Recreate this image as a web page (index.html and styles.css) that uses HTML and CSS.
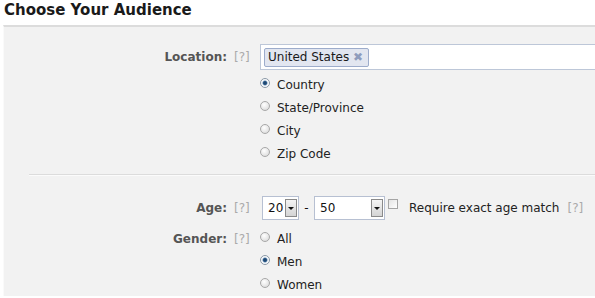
FILE: index.html
```html
<!DOCTYPE html>
<html lang="en">
<head>
  <meta charset="UTF-8">
  <title>Choose Your Audience</title>
  <link rel="stylesheet" href="styles.css">
</head>
<body>
  <h1 class="title">Choose Your Audience</h1>
  <div class="panel">
    <div class="row location">
      <div class="label">Location:</div>
      <div class="help">[?]</div>
      <div class="controls">
        <div class="token-input">
          <span class="token">United States <span class="remove">&#x2716;</span></span>
        </div>
        <ul class="radios">
          <li><span class="radio checked"></span>Country</li>
          <li><span class="radio"></span>State/Province</li>
          <li><span class="radio"></span>City</li>
          <li><span class="radio"></span>Zip Code</li>
        </ul>
      </div>
    </div>

    <div class="divider"></div>

    <div class="row age">
      <div class="label">Age:</div>
      <div class="help">[?]</div>
      <div class="controls inline">
        <div class="select small"><span class="value">20</span><span class="arrow"></span></div>
        <span class="dash">-</span>
        <div class="select wide"><span class="value">50</span><span class="arrow"></span></div>
        <span class="checkbox"></span>
        <span class="exact">Require exact age match</span>
        <span class="help-inline">[?]</span>
      </div>
    </div>

    <div class="row gender">
      <div class="label">Gender:</div>
      <div class="help">[?]</div>
      <div class="controls">
        <ul class="radios">
          <li><span class="radio"></span>All</li>
          <li><span class="radio checked"></span>Men</li>
          <li><span class="radio"></span>Women</li>
        </ul>
      </div>
    </div>
  </div>
</body>
</html>
```

FILE: styles.css
```css
html, body {
  height: 100%;
}
body {
  margin: 0;
  background: #fff;
  font-family: "DejaVu Sans", Verdana, sans-serif;
  font-size: 11px;
  color: #333;
  overflow: hidden;
}
.title {
  margin: 0;
  padding: 1px 0 0 4px;
  height: 25px;
  box-sizing: border-box;
  font-size: 15px;
  font-weight: bold;
  color: #1a1a1a;
}
.panel {
  margin-left: 3px;
  background: #f2f2f2;
  border-top: 2px solid #dcdcdc;
  border-left: 1px solid #fafafa;
  padding-top: 17px;
  height: calc(100% - 27px);
  box-sizing: border-box;
}
.row {
  display: grid;
  grid-template-columns: 223px 33px 1fr;
}
.label {
  text-align: right;
  font-weight: bold;
  font-size: 12px;
  color: #555;
  line-height: 26px;
}
.help {
  padding-left: 7px;
  color: #aaa;
  font-size: 12px;
  line-height: 26px;
}
.token-input {
  background: #fff;
  border: 1px solid #bdc7d8;
  border-right: none;
  padding: 3px 0 0 3px;
  box-sizing: border-box;
  height: 26px;
}
.token {
  display: inline-block;
  height: 17px;
  line-height: 17px;
  padding: 0 5px 0 3px;
  background: #e2e6f0;
  border: 1px solid #9daccb;
  border-radius: 2px;
  color: #1a1a1a;
  font-size: 12px;
}
.remove {
  color: #8e9cbd;
  font-size: 12px;
  font-weight: bold;
}
.radios {
  list-style: none;
  margin: 4px 0 0;
  padding: 0;
}
.radios li {
  height: 23px;
  line-height: 23px;
  display: flex;
  align-items: center;
  color: #222;
  font-size: 12px;
}
.radio {
  width: 8px;
  height: 8px;
  border-radius: 50%;
  border: 1px solid #a8a8a8;
  background: radial-gradient(circle at 40% 35%, #fff 0, #e6e6e6 60%, #cfcfcf 100%);
  margin: -5px 7px 0 0;
  box-sizing: content-box;
  flex: none;
}
.radio.checked {
  border-color: #8c9aa8;
  background: radial-gradient(circle, #1c3a5a 0, #2a5a8a 30%, #e8eef4 50%, #fff 70%, #d8d8d8 100%);
}
.divider {
  margin: 8px 0 20px 25px;
  border-top: 1px solid #dcdcdc;
  border-bottom: 1px solid #fbfbfb;
}
.age .label, .age .help {
  line-height: 24px;
}
.inline {
  display: flex;
  align-items: center;
  height: 24px;
}
.select {
  display: flex;
  align-items: center;
  height: 24px;
  box-sizing: border-box;
  background: #fff;
  border: 1px solid #b7c0d2;
  padding: 0 1px 0 5px;
  font-size: 12px;
  color: #111;
}
.select .value {
  flex: 1;
}
.select.small {
  width: 37px;
  margin-left: 2px;
}
.select.wide {
  width: 71px;
}
.arrow {
  width: 12px;
  height: 18px;
  box-sizing: border-box;
  border: 1px solid #8a8a8a;
  background: linear-gradient(#f4f4f4, #d4d4d4);
  position: relative;
}
.arrow::after {
  content: "";
  position: absolute;
  left: 2px;
  top: 7px;
  border-left: 3px solid transparent;
  border-right: 3px solid transparent;
  border-top: 3px solid #111;
}
.dash {
  width: 15px;
  text-align: center;
  font-size: 12px;
  color: #111;
}
.checkbox {
  width: 8px;
  height: 8px;
  border: 1px solid #a5a5a5;
  background: linear-gradient(135deg, #e4e4e4, #fff);
  margin: -9px 0 0 3px;
}
.exact {
  margin-left: 11px;
  font-size: 12px;
  color: #222;
}
.help-inline {
  margin-left: 8px;
  font-size: 12px;
  color: #aaa;
}
.gender {
  margin-top: 8px;
}
.gender .label, .gender .help {
  line-height: 23px;
}
.gender .radios {
  margin-top: 0;
}
```
